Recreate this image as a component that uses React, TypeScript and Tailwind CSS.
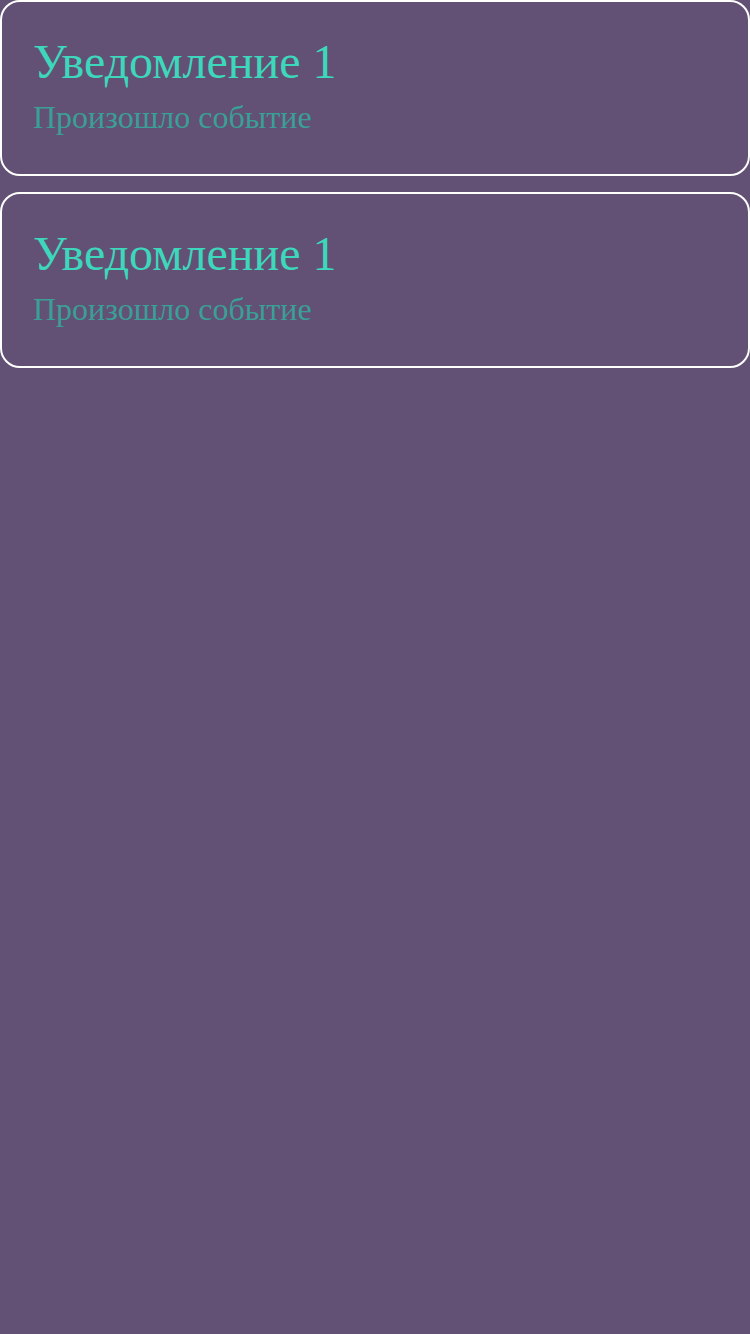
const NOTIFICATIONS = [
  { id: 1, title: "Уведомление 1", body: "Произошло событие" },
  { id: 2, title: "Уведомление 1", body: "Произошло событие" },
];

export default function App() {
  return (
    <div
      className="min-h-[1334px] w-[750px] bg-[#625175] flex flex-col gap-4"
      style={{ fontFamily: '"Liberation Serif", "Times New Roman", serif' }}
    >
      {NOTIFICATIONS.map((n) => (
        <div
          key={n.id}
          className="h-[176px] rounded-[20px] border-2 border-white px-[31px] pt-[32px]"
        >
          <h2 className="text-[48px] leading-[56px] text-[#3dd7bc]">{n.title}</h2>
          <p className="mt-[7px] text-[32px] leading-[40px] text-[#3a9f96]">{n.body}</p>
        </div>
      ))}
    </div>
  );
}
